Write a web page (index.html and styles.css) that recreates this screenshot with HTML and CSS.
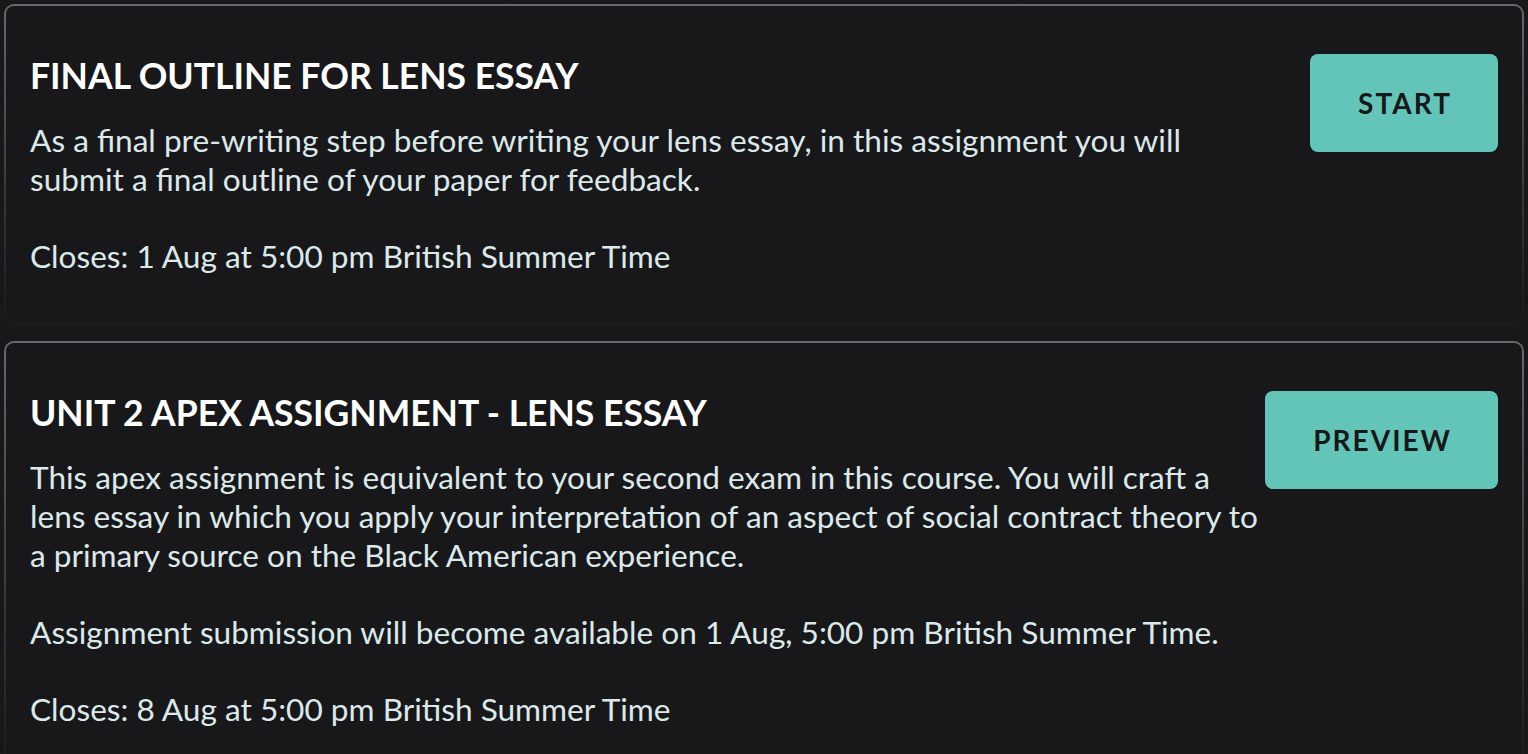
FILE: index.html
```html
<!DOCTYPE html>
<html lang="en">
<head>
  <meta charset="UTF-8">
  <meta name="viewport" content="width=device-width, initial-scale=1.0">
  <title>Assignments</title>
  <link rel="stylesheet" href="styles.css">
</head>
<body>
  <div class="assignment-list">
    <div class="assignment">
      <div class="assignment-info">
        <h2 class="assignment-title">Final Outline for Lens Essay</h2>
        <p>As a final pre-writing step before writing your lens essay, in this assignment you will submit a final outline of your paper for feedback.</p>
        <p>Closes: 1 Aug at 5:00 pm British Summer Time</p>
      </div>
      <button class="action">Start</button>
    </div>

    <div class="assignment">
      <div class="assignment-info">
        <h2 class="assignment-title">Unit 2 Apex Assignment - Lens Essay</h2>
        <p>This apex assignment is equivalent to your second exam in this course. You will craft a lens essay in which you apply your interpretation of an aspect of social contract theory to a primary source on the Black American experience.</p>
        <p>Assignment submission will become available on 1 Aug, 5:00 pm British Summer Time.</p>
        <p>Closes: 8 Aug at 5:00 pm British Summer Time</p>
      </div>
      <button class="action">Preview</button>
    </div>
  </div>
</body>
</html>
```

FILE: styles.css
```css
* {
  box-sizing: border-box;
  margin: 0;
  padding: 0;
}

body {
  font-family: 'Lato', sans-serif;
  background: #18181b;
  color: #dce9ea;
  overflow: hidden;
}

.assignment-list {
  padding: 4px;
  display: flex;
  flex-direction: column;
  gap: 16px;
}

.assignment {
  display: flex;
  align-items: flex-start;
  padding: 48px 24px;
  border: 2px solid transparent;
  border-radius: 10px;
  background:
    linear-gradient(#18181b, #18181b) padding-box,
    linear-gradient(to bottom, #68686c, #1c1c1f 95%) border-box;
}

.assignment-info {
  flex: 1;
  max-width: 1232px;
}

.assignment-title {
  font-size: 35.5px;
  font-weight: 700;
  line-height: 43px;
  color: #ffffff;
  text-transform: uppercase;
  margin-bottom: 24px;
}

.assignment-info p {
  font-size: 31.6px;
  line-height: 38.6px;
  margin-bottom: 38.6px;
}

.assignment-info p:last-child {
  margin-bottom: 0;
}

.action {
  margin-left: auto;
  background: #63c5b7;
  color: #18181b;
  border: none;
  border-radius: 8px;
  height: 98px;
  padding: 0 46px 0 48px;
  font-family: 'Lato', sans-serif;
  font-size: 28px;
  font-weight: 700;
  letter-spacing: 2px;
  text-transform: uppercase;
  cursor: pointer;
}
```
